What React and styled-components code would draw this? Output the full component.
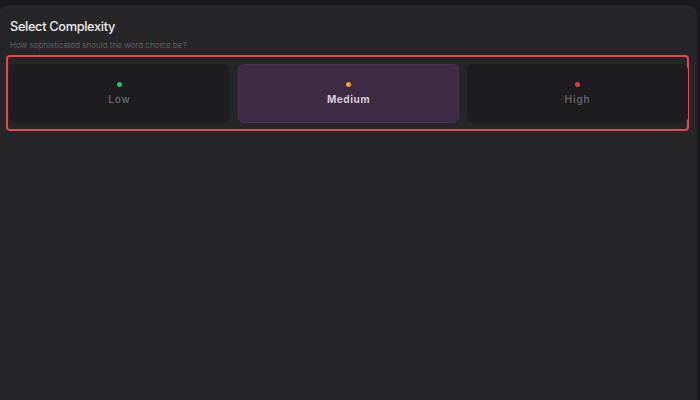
import React, { useState } from 'react';
import styled, { createGlobalStyle } from 'styled-components';

const GlobalStyle = createGlobalStyle`
  html, body {
    margin: 0;
    padding: 0;
    background: #1a1a1c;
    font-family: Inter, "Noto Sans", "Liberation Sans", sans-serif;
    -webkit-font-smoothing: antialiased;
  }
`;

const Page = styled.div`
  width: 700px;
  height: 400px;
  padding-top: 5px;
  box-sizing: border-box;
  overflow: hidden;
`;

const Panel = styled.div`
  width: 698px;
  height: 395px;
  margin-left: -1px;
  box-sizing: border-box;
  background: #262628;
  border-radius: 10px 10px 0 0;
  padding: 14px 0 0 11px;
`;

const Titulo = styled.h2`
  margin: 0;
  color: #ececee;
  font-size: 12.8px;
  font-weight: 500;
  line-height: 16px;
  letter-spacing: -0.35px;
`;

const Subtitulo = styled.p`
  margin: 5px 0 0;
  color: #5f5f64;
  font-size: 8px;
  line-height: 11px;
`;

const Opcoes = styled.div`
  margin: 4px 0 0 -4px;
  width: 683px;
  box-sizing: border-box;
  border: 2px solid #e5484d;
  border-radius: 4px;
  padding: 7px 0 6px 1px;
  display: grid;
  grid-template-columns: repeat(3, 221px);
  gap: 8px;
`;

const Opcao = styled.button`
  height: 59px;
  box-sizing: border-box;
  border-radius: 6px;
  border: 1px solid ${p => (p.$ativo ? '#4b3554' : '#1e1d21')};
  background: ${p => (p.$ativo ? '#3d2b45' : '#1d1c20')};
  display: flex;
  flex-direction: column;
  align-items: center;
  justify-content: center;
  gap: 6px;
  padding: 0;
  cursor: pointer;
  font-family: inherit;
`;

const Ponto = styled.span`
  width: 5px;
  height: 5px;
  border-radius: 50%;
  background: ${p => p.$cor};
`;

const Rotulo = styled.span`
  font-size: 10px;
  line-height: 12px;
  letter-spacing: ${p => (p.$ativo ? '0.6px' : '0.9px')};
  font-weight: ${p => (p.$ativo ? 700 : 500)};
  color: ${p => (p.$ativo ? '#d6cdda' : '#6d6c71')};
`;

const niveis = [
  { id: 'low', nome: 'Low', cor: '#22c55e' },
  { id: 'medium', nome: 'Medium', cor: '#f5a60b' },
  { id: 'high', nome: 'High', cor: '#f0333f' },
];

const App = () => {
  const [selecionado, setSelecionado] = useState('medium');

  return (
    <Page>
      <GlobalStyle />
      <Panel>
        <Titulo>Select Complexity</Titulo>
        <Subtitulo>How sophisticated should the word choice be?</Subtitulo>
        <Opcoes>
          {niveis.map(nivel => {
            const ativo = nivel.id === selecionado;
            return (
              <Opcao
                key={nivel.id}
                $ativo={ativo}
                onClick={() => setSelecionado(nivel.id)}
              >
                <Ponto $cor={nivel.cor} />
                <Rotulo $ativo={ativo}>{nivel.nome}</Rotulo>
              </Opcao>
            );
          })}
        </Opcoes>
      </Panel>
    </Page>
  );
};

export default App;
